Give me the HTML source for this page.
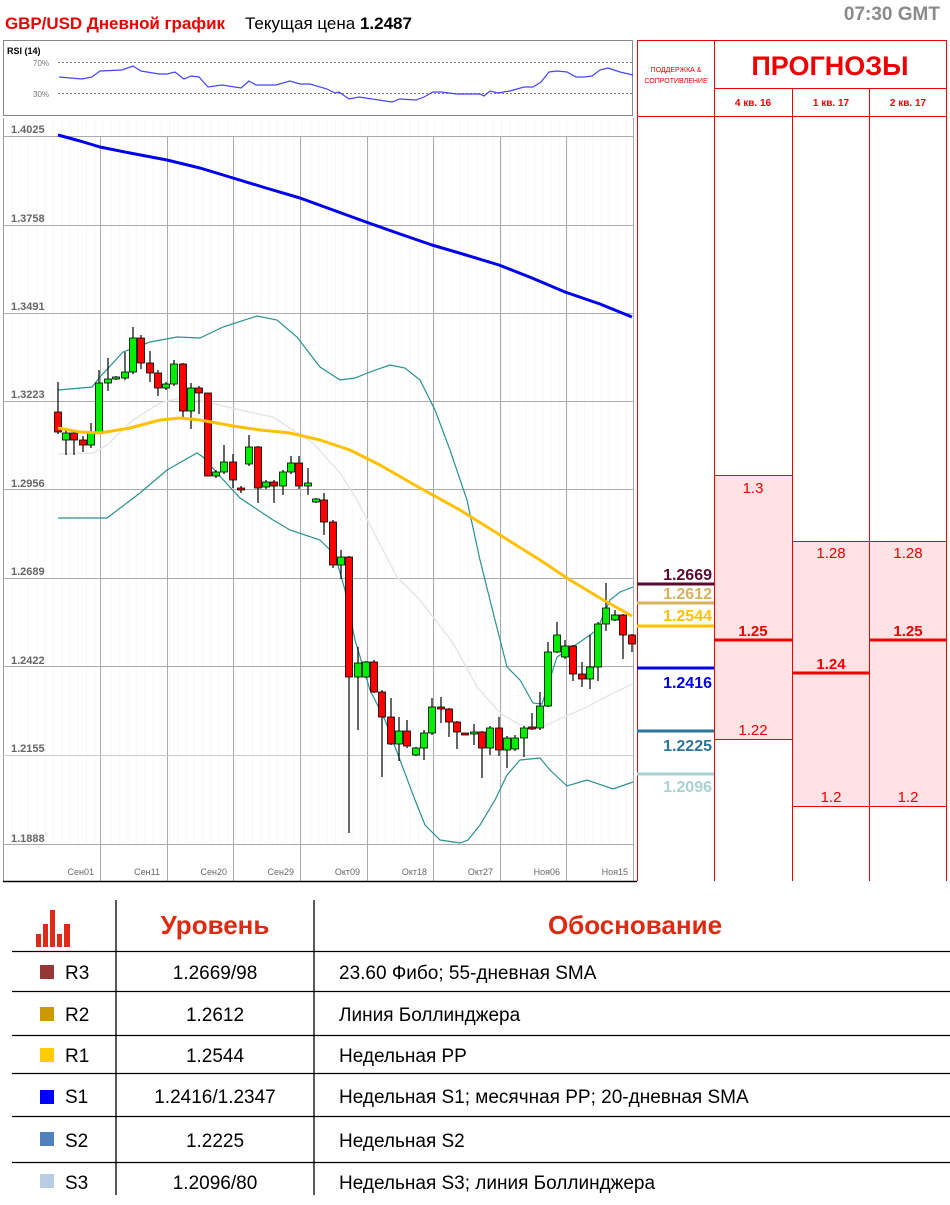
<!DOCTYPE html>
<html><head><meta charset="utf-8">
<style>
body{margin:0;width:950px;height:1205px;background:#fff;font-family:"Liberation Sans",sans-serif;position:relative;overflow:hidden}
.abs{position:absolute}
</style></head><body>
<svg class="abs" style="left:0;top:0" width="950" height="885" xmlns="http://www.w3.org/2000/svg">
<defs>
<pattern id="minor" x="3" y="0" width="8.3" height="10" patternUnits="userSpaceOnUse"><line x1="0.5" y1="0" x2="0.5" y2="10" stroke="#f6f6f6" stroke-width="1"/></pattern>
</defs>
<text x="5" y="29" font-family="Liberation Sans" font-weight="bold" font-size="17" fill="#ee0000" textLength="220">GBP/USD Дневной график</text>
<text x="245" y="29" font-family="Liberation Sans" font-size="17" fill="#000">Текущая цена <tspan font-weight="bold">1.2487</tspan></text>
<text x="940" y="20" text-anchor="end" font-family="Liberation Sans" font-weight="bold" font-size="19" fill="#8a8a8a">07:30 GMT</text>
<!-- RSI -->
<rect x="3.5" y="40.5" width="629" height="75" fill="#fff" stroke="#888"/>
<text x="7" y="54" font-size="9" font-weight="bold" fill="#000">RSI (14)</text>
<line x1="58" y1="62.5" x2="632" y2="62.5" stroke="#777" stroke-dasharray="2,2"/>
<line x1="58" y1="93.5" x2="632" y2="93.5" stroke="#777" stroke-dasharray="2,2"/>
<text x="33" y="66" font-size="8" fill="#777">70%</text>
<text x="33" y="97" font-size="8" fill="#777">30%</text>
<polyline fill="none" stroke="#4444ff" stroke-width="1.2" points="59,77 82,79 92,77 100,71 122,70 133,66 141,71 159,74 167,74 175,72 184,79 191,76 199,77 208,87 222,85 241,88 249,81 256,85 276,85 290,81 300,84 310,84 327,89 335,93 339,92 349,99 359,97 392,102 400,99 416,100 424,97 433,92 441,92 457,94 480,94 484,96 490,91 498,93 510,91 524,87 533,87 541,82 549,72 557,71 567,72 576,77 584,77 592,76 600,70 608,68 620,72 633,75"/>
<!-- main chart -->
<rect x="3" y="120" width="630" height="724" fill="url(#minor)"/>
<line x1="3.5" y1="118" x2="3.5" y2="881" stroke="#999"/>
<g stroke="#aaa" stroke-width="1">
<line x1="100.5" y1="136" x2="100.5" y2="881"/><line x1="167.5" y1="136" x2="167.5" y2="881"/><line x1="233.5" y1="136" x2="233.5" y2="881"/><line x1="300.5" y1="136" x2="300.5" y2="881"/><line x1="367.5" y1="136" x2="367.5" y2="881"/><line x1="433.5" y1="136" x2="433.5" y2="881"/><line x1="500.5" y1="136" x2="500.5" y2="881"/><line x1="566.5" y1="136" x2="566.5" y2="881"/><line x1="633.5" y1="118" x2="633.5" y2="881"/>
<line x1="3" y1="136.5" x2="633" y2="136.5"/><line x1="3" y1="225.5" x2="633" y2="225.5"/><line x1="3" y1="313.5" x2="633" y2="313.5"/><line x1="3" y1="401.5" x2="633" y2="401.5"/><line x1="3" y1="489.5" x2="633" y2="489.5"/><line x1="3" y1="578.5" x2="633" y2="578.5"/><line x1="3" y1="666.5" x2="633" y2="666.5"/><line x1="3" y1="755.5" x2="633" y2="755.5" stroke="#ccc"/><line x1="3" y1="844.5" x2="633" y2="844.5"/>
</g>
<g font-size="11" fill="#666" font-weight="bold">
<text x="11" y="133">1.4025</text><text x="11" y="222">1.3758</text><text x="11" y="310">1.3491</text><text x="11" y="398">1.3223</text><text x="11" y="487">1.2956</text><text x="11" y="575">1.2689</text><text x="11" y="664">1.2422</text><text x="11" y="752">1.2155</text><text x="11" y="842">1.1888</text>
</g>
<g font-size="9" fill="#666" text-anchor="end">
<text x="94" y="875">Сен01</text><text x="160" y="875">Сен11</text><text x="227" y="875">Сен20</text><text x="294" y="875">Сен29</text><text x="360" y="875">Окт09</text><text x="427" y="875">Окт18</text><text x="493" y="875">Окт27</text><text x="560" y="875">Ноя06</text><text x="628" y="875">Ноя15</text>
</g>
<line x1="3" y1="881.5" x2="637" y2="881.5" stroke="#000" stroke-width="1.5"/>
<!-- indicators -->
<polyline fill="none" stroke="#e6e6e6" stroke-width="1.5" points="58,454 93,453 107,445 133,420 160,403 180,398 207,402 240,410 273,417 293,430 313,443 340,473 357,500 397,577 420,600 453,643 477,687 500,713 520,725 540,728 553,722 587,707 613,693 633,684"/>
<polyline fill="none" stroke="#2a9090" stroke-width="1.2" points="58,390 92,387 100,377 123,352 150,342 177,337 200,338 223,327 257,316 277,320 297,337 320,367 340,380 355,378 370,372 390,365 405,368 420,380 435,410 450,450 467,500 480,560 495,620 507,667 520,680 533,703 542,704 557,657 580,642 597,630 610,600 620,592 633,587"/>
<polyline fill="none" stroke="#2a9090" stroke-width="1.2" points="58,518 107,518 140,493 167,470 197,453 203,457 217,473 240,498 273,520 290,530 320,540 335,555 345,590 355,640 370,690 385,720 400,760 415,800 425,825 440,840 460,843 468,840 480,825 495,800 507,775 520,760 540,758 550,770 567,786 587,780 613,789 633,782"/>
<polyline fill="none" stroke="#0000ee" stroke-width="3" stroke-linejoin="round" points="58,135 80,141 100,147 130,153 167,160 200,168 233,178 266,188 300,198 333,210 366,222 400,234 432,245 466,255 499,265 532,278 565,292 600,304 632,317"/>
<g id="candles"></g>
<polyline fill="none" stroke="#ffc000" stroke-width="3" stroke-linejoin="round" points="58,428 80,432 100,433 130,428 160,420 180,418 200,420 233,426 260,430 290,433 320,440 350,450 380,465 420,488 460,510 500,535 540,560 570,580 600,598 632,616"/>
<!-- right panel -->
<rect x="714" y="475" width="78" height="265" fill="#ffe2e4"/>
<rect x="792" y="541" width="155" height="266" fill="#ffe2e4"/>
<g stroke="#ee0000" stroke-width="1" fill="none">
<line x1="637.5" y1="40" x2="637.5" y2="881"/><line x1="714.5" y1="40" x2="714.5" y2="881"/><line x1="792.5" y1="88" x2="792.5" y2="881"/><line x1="869.5" y1="88" x2="869.5" y2="881"/><line x1="946.5" y1="40" x2="946.5" y2="881"/>
<line x1="637" y1="40.5" x2="947" y2="40.5"/><line x1="714" y1="88.5" x2="947" y2="88.5"/><line x1="637" y1="116.5" x2="947" y2="116.5"/>
<line x1="714" y1="475.5" x2="792" y2="475.5"/><line x1="714" y1="739.5" x2="792" y2="739.5"/>
<line x1="792" y1="541.5" x2="947" y2="541.5"/><line x1="792" y1="806.5" x2="947" y2="806.5"/>
</g>
<text x="676" y="72" text-anchor="middle" font-size="7" fill="#ee0000">ПОДДЕРЖКА &amp;</text>
<text x="676" y="83" text-anchor="middle" font-size="7" fill="#ee0000">СОПРОТИВЛЕНИЕ</text>
<text x="830" y="75" text-anchor="middle" font-size="27" font-weight="bold" fill="#ee0000">ПРОГНОЗЫ</text>
<g font-size="10" font-weight="bold" fill="#ee0000" text-anchor="middle"><text x="753" y="106">4 кв. 16</text><text x="831" y="106">1 кв. 17</text><text x="908" y="106">2 кв. 17</text></g>
<g stroke-width="3">
<line x1="714" y1="640" x2="792" y2="640" stroke="#ee0000"/><line x1="792" y1="673" x2="869" y2="673" stroke="#ee0000"/><line x1="869" y1="640" x2="947" y2="640" stroke="#ee0000"/>
<line x1="637" y1="584" x2="714" y2="584" stroke="#5a0a30"/><line x1="637" y1="603" x2="714" y2="603" stroke="#d8b060"/><line x1="637" y1="626" x2="714" y2="626" stroke="#ffc000"/><line x1="637" y1="668" x2="714" y2="668" stroke="#0000ee"/><line x1="637" y1="731" x2="714" y2="731" stroke="#2e7398"/><line x1="637" y1="774" x2="714" y2="774" stroke="#a8d2d2"/>
</g>
<g font-size="16" font-weight="bold" text-anchor="end">
<text x="712" y="580" fill="#5a0a30">1.2669</text><text x="712" y="599" fill="#d8b060">1.2612</text><text x="712" y="621" fill="#ffc000">1.2544</text><text x="712" y="688" fill="#0000ee">1.2416</text><text x="712" y="751" fill="#2e7398">1.2225</text><text x="712" y="792" fill="#a8d2d2">1.2096</text>
</g>
<g font-size="15" fill="#ee0000" text-anchor="middle">
<text x="753" y="493">1.3</text><text x="831" y="558">1.28</text><text x="908" y="558">1.28</text><text x="753" y="735">1.22</text><text x="831" y="802">1.2</text><text x="908" y="802">1.2</text>
<text x="753" y="636" font-weight="bold">1.25</text><text x="831" y="669" font-weight="bold">1.24</text><text x="908" y="636" font-weight="bold">1.25</text>
</g>
</svg>
<script>
var C=[[58,412,432,382,434,'r'],[66,433,440,428,455,'g'],[74,433,440,430,455,'r'],[83,440,445,436,452,'r'],[91,433,445,423,448,'g'],[99,383,432,370,432,'g'],[108,379,383,358,391,'g'],[116,377,379,376,380,'g'],[125,372,378,352,380,'g'],[133,338,372,327,374,'g'],[141,338,363,335,369,'r'],[150,363,373,351,382,'r'],[158,373,388,370,396,'r'],[166,384,388,382,390,'g'],[174,364,384,360,386,'g'],[183,364,411,363,418,'r'],[191,388,411,383,429,'g'],[199,388,393,386,414,'r'],[208,393,476,393,476,'r'],[216,472,476,470,478,'g'],[224,462,472,445,474,'g'],[233,462,480,454,488,'r'],[241,488,490,486,493,'r'],[249,447,464,435,466,'g'],[258,447,488,446,503,'r'],[266,482,487,480,489,'g'],[274,482,486,480,503,'r'],[283,472,486,470,495,'g'],[291,463,472,456,474,'g'],[299,463,486,456,489,'r'],[308,483,486,468,495,'g'],[316,499,502,498,503,'g'],[324,500,522,493,535,'r'],[333,522,565,520,568,'r'],[341,557,565,550,579,'g'],[349,557,677,556,833,'r'],[358,663,677,647,730,'g'],[366,662,677,661,678,'g'],[374,662,692,660,693,'r'],[382,692,717,690,777,'r'],[391,717,744,698,745,'r'],[399,731,744,717,761,'g'],[407,731,746,720,748,'r'],[416,748,755,747,756,'g'],[424,733,748,730,760,'g'],[432,707,733,698,735,'g'],[441,707,709,697,723,'r'],[449,709,722,708,737,'r'],[457,722,732,721,749,'r'],[465,733,735,733,735,'r'],[474,732,734,724,745,'g'],[482,732,748,731,778,'r'],[490,728,748,726,755,'g'],[499,728,750,717,756,'r'],[507,738,750,736,768,'g'],[515,738,749,735,751,'g'],[524,728,738,726,757,'g'],[532,727,729,713,730,'r'],[540,706,728,692,730,'g'],[548,652,706,642,707,'g'],[557,635,652,622,653,'g'],[565,646,657,640,659,'g'],[573,646,674,645,681,'r'],[582,674,679,662,687,'r'],[590,667,679,635,689,'g'],[598,624,667,622,681,'g'],[606,608,624,583,631,'g'],[615,615,620,610,621,'g'],[623,615,635,614,659,'r'],[632,635,644,634,652,'r']];
var g=document.getElementById('candles'),s='';
C.forEach(function(c){var x=c[0];s+='<line x1="'+x+'" y1="'+c[3]+'" x2="'+x+'" y2="'+c[4]+'" stroke="#000" stroke-width="1.2"/>';var h=Math.max(c[2]-c[1],1.5);s+='<rect x="'+(x-3.5)+'" y="'+c[1]+'" width="7" height="'+h+'" fill="'+(c[5]=='r'?'#ff0000':'#00ee00')+'" stroke="#000" stroke-width="0.8"/>';});
g.innerHTML=s;
</script>
<!-- bottom table -->
<svg class="abs" style="left:0;top:885" width="950" height="320" xmlns="http://www.w3.org/2000/svg">
<g fill="#dd2a1a">
<rect x="36" y="49" width="5" height="13"/><rect x="43" y="39" width="5" height="23"/><rect x="50" y="25" width="5" height="37"/><rect x="57" y="49" width="5" height="13"/><rect x="64" y="39" width="6" height="23"/>
</g>
<g stroke="#000" stroke-width="1.3">
<line x1="116" y1="15" x2="116" y2="310"/><line x1="314" y1="15" x2="314" y2="310"/>
<line x1="12" y1="66.5" x2="950" y2="66.5"/><line x1="12" y1="106.5" x2="950" y2="106.5"/><line x1="12" y1="150.5" x2="950" y2="150.5"/><line x1="12" y1="188.5" x2="950" y2="188.5"/><line x1="12" y1="231.5" x2="950" y2="231.5"/><line x1="12" y1="277.5" x2="950" y2="277.5"/>
</g>
<g font-size="26" font-weight="bold" fill="#dd2a10" text-anchor="middle"><text x="215" y="49">Уровень</text><text x="635" y="49">Обоснование</text></g>
<rect x="40" y="80" width="14" height="14" fill="#953735"/><rect x="40" y="122" width="14" height="14" fill="#cc9900"/><rect x="40" y="163" width="14" height="14" fill="#ffcc00"/><rect x="40" y="205" width="14" height="14" fill="#0000ff"/><rect x="40" y="247" width="14" height="14" fill="#4f81bd"/><rect x="40" y="289" width="14" height="14" fill="#b8cce4"/>
<g font-size="19" fill="#000">
<text x="65" y="94">R3</text><text x="65" y="136">R2</text><text x="65" y="177">R1</text><text x="65" y="218">S1</text><text x="65" y="262">S2</text><text x="65" y="304">S3</text>
<g text-anchor="middle"><text x="215" y="94">1.2669/98</text><text x="215" y="136">1.2612</text><text x="215" y="177">1.2544</text><text x="215" y="218">1.2416/1.2347</text><text x="215" y="262">1.2225</text><text x="215" y="304">1.2096/80</text></g>
<text x="339" y="94">23.60 Фибо; 55-дневная SMA</text><text x="339" y="136">Линия Боллинджера</text><text x="339" y="177">Недельная PP</text><text x="339" y="218">Недельная S1; месячная PP; 20-дневная SMA</text><text x="339" y="262">Недельная S2</text><text x="339" y="304">Недельная S3; линия Боллинджера</text>
</g>
</svg>
</body></html>
